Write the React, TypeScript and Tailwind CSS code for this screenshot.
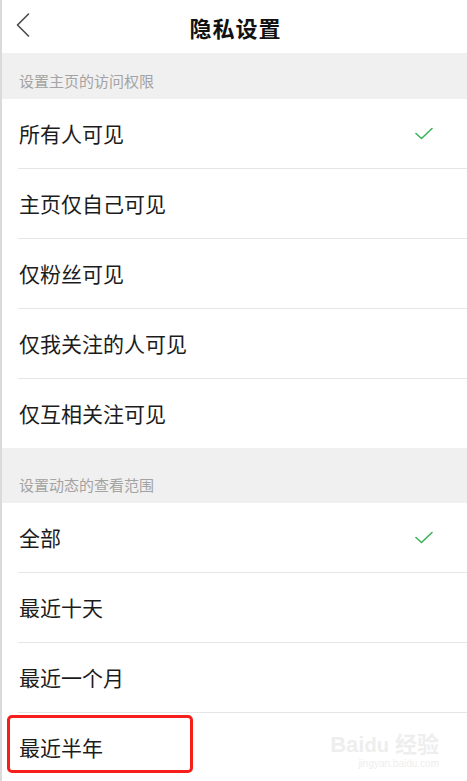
import React from 'react';

const cjk = { fontFamily: '"Noto Sans CJK SC", "Noto Sans", sans-serif' };

const Check = () => (
  <svg width="18" height="13" viewBox="0 0 18 13" fill="none">
    <path d="M1 6.5 L6.5 11.5 L17 1.5" stroke="#3bb35a" strokeWidth="1.6" strokeLinecap="round" strokeLinejoin="round" />
  </svg>
);

const Row = ({ label, checked, last, marked }: { label: string; checked?: boolean; last?: boolean; marked?: boolean }) => (
  <div className="relative">
    <div
      className={`ml-[16px] pl-[1px] pr-[34px] flex items-center justify-between ${
        last ? 'h-[69px]' : 'h-[70px] border-b border-[#e6e6e6]'
      }`}
    >
      <span className="text-[21px] text-[#1c1c1c] leading-none">{label}</span>
      {checked && <Check />}
    </div>
    {marked && (
      <div className="absolute left-[5px] top-[2px] w-[186px] h-[58px] border-[3px] border-[#f5201c] rounded-[5px]" />
    )}
  </div>
);

const SectionHeader = ({ title, h }: { title: string; h: string }) => (
  <div className={`bg-[#f0f0f0] flex items-end pl-[17px] pb-[11px] ${h}`}>
    <span className="text-[15px] text-[#a3a3a3] leading-none">{title}</span>
  </div>
);

export default function App() {
  return (
    <div className="w-[467px] h-[781px] overflow-hidden bg-white border-l-2 border-[#dadada] relative" style={cjk}>
      <div className="h-[53px] relative flex items-center justify-center">
        <svg className="absolute left-[14px] top-[13px]" width="14" height="24" viewBox="0 0 14 24" fill="none">
          <path d="M12.5 1 L1.5 12 L12.5 23" stroke="#4a4a4a" strokeWidth="1.6" strokeLinejoin="round" strokeLinecap="round" />
        </svg>
        <span className="text-[22px] font-bold text-[#111] tracking-[1px] leading-none ml-[2px]">隐私设置</span>
      </div>

      <SectionHeader title="设置主页的访问权限" h="h-[46px]" />
      <Row label="所有人可见" checked />
      <Row label="主页仅自己可见" />
      <Row label="仅粉丝可见" />
      <Row label="仅我关注的人可见" />
      <Row label="仅互相关注可见" last />

      <SectionHeader title="设置动态的查看范围" h="h-[55px]" />
      <Row label="全部" checked />
      <Row label="最近十天" />
      <Row label="最近一个月" />
      <Row label="最近半年" last marked />

      <div className="absolute right-[28px] bottom-[12px] flex flex-col items-end text-[#eeeeee] leading-none select-none">
        <span className="text-[22px] font-bold" style={{ fontFamily: '"Liberation Sans", "Noto Sans CJK SC", sans-serif' }}>
          Bai<span className="text-[20px]">du</span> 经验
        </span>
        <span className="text-[10px] mt-[3px]" style={{ fontFamily: '"Liberation Sans", sans-serif' }}>jingyan.baidu.com</span>
      </div>
    </div>
  );
}
